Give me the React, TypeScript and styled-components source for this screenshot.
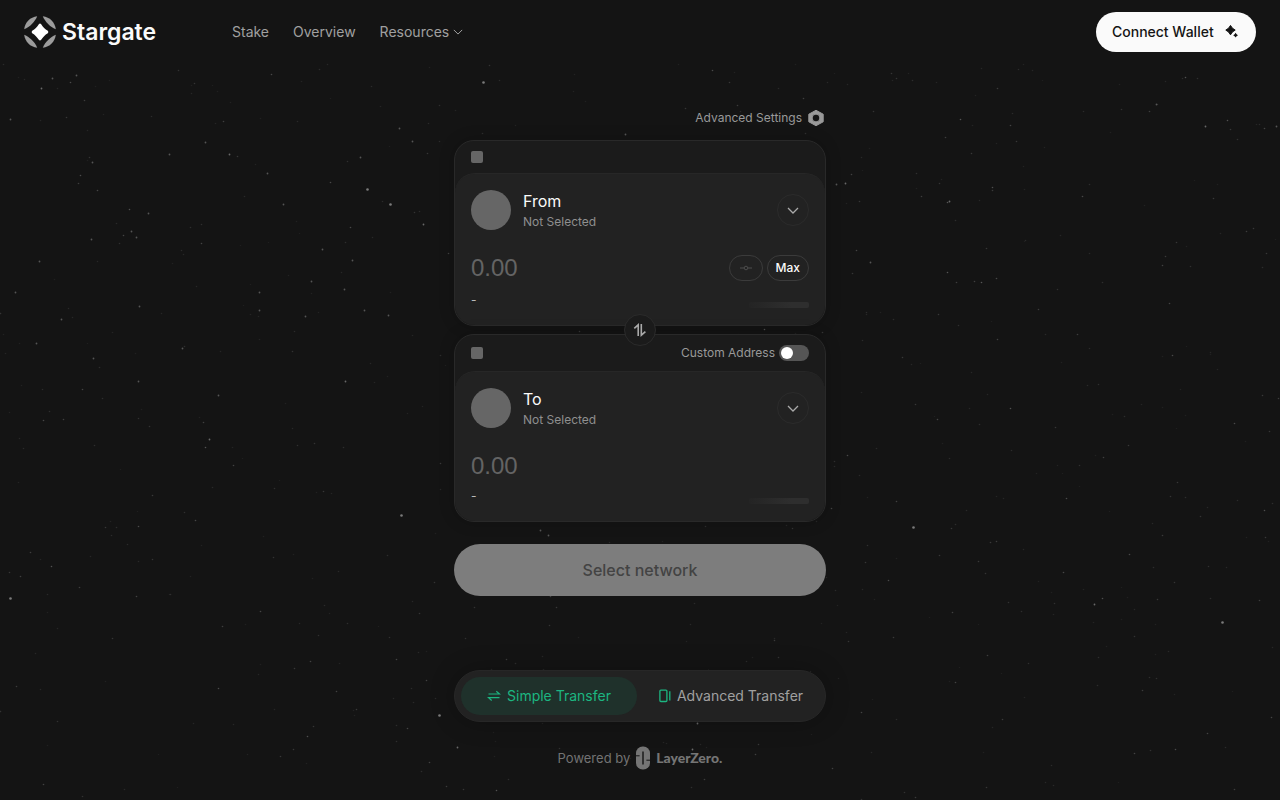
import React, { useState } from "react";
import styled, { createGlobalStyle } from "styled-components";

const GlobalStyle = createGlobalStyle`
  *, *::before, *::after { box-sizing: border-box; }
  body { margin: 0; background: #141414; color: #fafafa; font-family: Inter, "Liberation Sans", sans-serif; }
  button, input { font: inherit; color: inherit; margin: 0; }
  button { border: 0; background: none; padding: 0; cursor: pointer; }
  svg { display: block; flex: none; }
`;

const Page = styled.div`
  position: relative;
  min-height: 100vh;
  display: flex;
  flex-direction: column;
`;

const Sky = styled.svg`
  position: absolute;
  inset: 0;
  width: 100%;
  height: 100%;
  pointer-events: none;
`;

const Header = styled.header`
  position: relative;
  display: flex;
  align-items: center;
  padding: 12px 24px;
`;

const Brand = styled.a`
  display: flex;
  align-items: center;
  gap: 6px;
  width: 208px;
  color: #fafafa;
  text-decoration: none;
  font-size: 23px;
  font-weight: 600;
  line-height: 32px;
`;

const Nav = styled.nav`
  display: flex;
  gap: 24px;
  flex: 1;
  font-size: 14px;
  line-height: 20px;
  color: #a0a0a0;
`;

const NavLink = styled.a`
  color: inherit;
  text-decoration: none;
`;

const NavMenu = styled.button`
  display: flex;
  align-items: center;
  gap: 4px;
`;

const WalletButton = styled.button`
  display: flex;
  align-items: center;
  justify-content: space-between;
  width: 160px;
  height: 40px;
  padding: 0 16px;
  border-radius: 20px;
  background: #fafafa;
  color: #141414;
  font-size: 14px;
  font-weight: 500;
  line-height: 20px;
`;

const Main = styled.main`
  position: relative;
  flex: 1;
  display: flex;
  flex-direction: column;
  width: 100%;
  max-width: 372px;
  margin: 0 auto;
  padding-top: 44px;
`;

const SettingsButton = styled.button`
  display: flex;
  align-items: center;
  align-self: flex-end;
  gap: 4px;
  height: 20px;
  margin-bottom: 12px;
  font-size: 12px;
  line-height: 16px;
  color: #999;
`;

const Card = styled.section`
  border: 1px solid #292929;
  border-radius: 20px;
  background: #1b1b1b;
  box-shadow: 0 0 16px rgba(0, 0, 0, 0.2);
`;

const CardHead = styled.div<{ $tall?: boolean }>`
  display: flex;
  align-items: center;
  justify-content: space-between;
  height: ${(p) => (p.$tall ? 36 : 32)}px;
  padding: 0 16px;
`;

const Badge = styled.span`
  width: 12px;
  height: 12px;
  border-radius: 2px;
  background: #666;
`;

const CardBody = styled.div`
  border-top: 1px solid #272727;
  border-radius: 20px;
  background: #222;
  padding: 16px 16px 17px;
`;

const TokenRow = styled.div`
  display: flex;
  align-items: center;
  gap: 12px;
`;

const TokenIcon = styled.span`
  width: 40px;
  height: 40px;
  border-radius: 50%;
  background: #666;
`;

const TokenText = styled.div`
  display: flex;
  flex-direction: column;
  gap: 2px;
  flex: 1;
`;

const TokenTitle = styled.div`
  font-size: 16px;
  line-height: 22px;
`;

const TokenNote = styled.div`
  font-size: 12px;
  line-height: 16px;
  color: #8f8f8f;
`;

const RoundButton = styled.button<{ $dark?: boolean }>`
  display: flex;
  align-items: center;
  justify-content: center;
  flex: none;
  width: 32px;
  height: 32px;
  border: 1px solid #2b2b2b;
  border-radius: 50%;
  background: ${(p) => (p.$dark ? "#1b1b1b" : "transparent")};
  color: #aaa;
`;

const AmountRow = styled.div`
  display: flex;
  align-items: center;
  gap: 4px;
  height: 28px;
  margin-top: 24px;
`;

const AmountInput = styled.input`
  flex: 1;
  min-width: 0;
  height: 28px;
  padding: 0;
  border: 0;
  outline: 0;
  background: transparent;
  font: 400 24px/28px "Liberation Sans", sans-serif;
  &::placeholder { color: #646464; opacity: 1; }
`;

const Pill = styled.button`
  display: flex;
  align-items: center;
  justify-content: center;
  min-width: 34px;
  height: 26px;
  padding: 0 8px;
  border: 1px solid #3b3b3b;
  border-radius: 13px;
  font-size: 12px;
  font-weight: 500;
  line-height: 16px;
`;

const ValueRow = styled.div<{ $gap: number }>`
  display: flex;
  align-items: flex-end;
  justify-content: space-between;
  margin-top: ${(p) => p.$gap}px;
  font-size: 12px;
  line-height: 16px;
  color: #bbb;
`;

const Skeleton = styled.span`
  width: 60px;
  height: 6px;
  border-radius: 2px;
  background: linear-gradient(90deg, #242424, #2e2e2e 70%);
`;

const Seam = styled.div`
  position: relative;
  z-index: 1;
  display: flex;
  align-items: center;
  justify-content: center;
  height: 8px;
`;

const SwitchLabel = styled.label`
  display: flex;
  align-items: center;
  gap: 4px;
  font-size: 12px;
  line-height: 16px;
  color: #999;
`;

const Switch = styled.input`
  appearance: none;
  display: flex;
  align-items: center;
  width: 30px;
  height: 16px;
  padding: 0 2px;
  border-radius: 8px;
  background: #555;
  cursor: pointer;
  &::before {
    content: "";
    width: 12px;
    height: 12px;
    border-radius: 50%;
    background: #fff;
  }
  &:checked { justify-content: flex-end; background: #18a978; }
`;

const SubmitButton = styled.button`
  height: 52px;
  margin-top: 22px;
  border-radius: 26px;
  background: #7d7d7d;
  color: #434343;
  font-size: 16px;
  font-weight: 500;
  line-height: 22px;
`;

const ModeBar = styled.div`
  display: grid;
  grid-template-columns: 1fr 1fr;
  gap: 6px;
  height: 52px;
  margin-top: auto;
  padding: 6px;
  border: 1px solid #272727;
  border-radius: 26px;
  background: #222;
  box-shadow: 0 0 24px rgba(0, 0, 0, 0.25);
`;

const ModeButton = styled.button<{ $active?: boolean }>`
  display: flex;
  align-items: center;
  justify-content: center;
  gap: 6px;
  border-radius: 20px;
  background: ${(p) => (p.$active ? "#1f312b" : "transparent")};
  color: ${(p) => (p.$active ? "#1cb681" : "#a0a0a0")};
  font-size: 14px;
  line-height: 20px;
  white-space: nowrap;
`;

const Footer = styled.footer`
  position: relative;
  display: flex;
  align-items: center;
  justify-content: center;
  gap: 6px;
  padding: 24px 0 30px;
  font-size: 13px;
  line-height: 24px;
  color: #737373;
`;

const FooterBrand = styled.a`
  display: flex;
  align-items: center;
  gap: 6px;
  color: #757575;
  text-decoration: none;
  font-family: Lato, sans-serif;
  font-size: 14px;
  font-weight: 900;
`;

const brightStars: number[][] = [
  [41, 88, 2], [52, 78, 1], [76, 75, 1], [10, 119, 1], [92, 162, 1], [169, 154, 1], [229, 154, 2],
  [205, 142, 1], [267, 173, 1], [360, 157, 1], [412, 141, 1], [399, 128, 1], [367, 189, 3], [390, 204, 3],
  [423, 224, 2], [283, 204, 1], [148, 213, 1], [131, 231, 1], [136, 237, 1], [39, 261, 1], [91, 239, 1],
  [15, 292, 1], [139, 306, 1], [259, 292, 1], [259, 310, 1], [311, 281, 1], [322, 249, 1], [352, 260, 1],
  [344, 289, 1], [305, 316, 1], [364, 310, 1], [388, 315, 1], [61, 319, 1], [36, 343, 1], [93, 358, 1],
  [138, 381, 1], [345, 381, 2], [209, 439, 2], [182, 348, 1], [218, 395, 1], [401, 515, 3], [439, 715, 3],
  [10, 598, 3], [913, 527, 3], [1222, 622, 3], [845, 183, 2], [949, 201, 2], [1156, 104, 1],
  [1205, 126, 2], [870, 262, 1], [1094, 604, 2], [483, 82, 3], [457, 747, 2], [692, 749, 2],
  [625, 134, 1], [1276, 126, 1], [836, 184, 1], [697, 723, 2], [540, 530, 1], [548, 535, 1],
];

const faintStars = (() => {
  let seed = 71;
  const next = () => (seed = (seed * 16807) % 2147483647) / 2147483647;
  return Array.from({ length: 700 }, () => [
    Math.floor(next() * 1280),
    Math.floor(64 + next() * 736),
    0.05 + next() * next() * 0.25,
  ]);
})();

const Stars = () => (
  <Sky viewBox="0 0 1280 800" preserveAspectRatio="xMidYMid slice" aria-hidden="true">
    {faintStars.map(([x, y, o], i) => (
      <circle key={i} cx={x + 0.5} cy={y + 0.5} r="0.8" fill="#fff" opacity={o} />
    ))}
    {brightStars.map(([x, y, level], i) => (
      <circle key={i} cx={x + 0.5} cy={y + 0.5} r={level > 2 ? 1.3 : 0.9} fill="#fff" opacity={0.2 + level * 0.08} />
    ))}
  </Sky>
);

const StargateLogo = () => (
  <svg width="32" height="32" viewBox="0 0 32 32" aria-hidden="true">
    <g fill="#9c9c9c">
      {[0, 90, 180, 270].map((a) => (
        <path key={a} transform={`rotate(${a} 16 16)`} d="M0.2 13.2C1 6.2 6.2 1 13.2 .2C12 3.2 10.2 5.6 7.9 7.9C5.6 10.2 3.2 12 .2 13.2Z" />
      ))}
    </g>
    <path fill="#fff" d="M14.8 8.2Q16 7 17.2 8.2C18.9 11 21 13.1 23.8 14.8Q25 16 23.8 17.2C21 18.9 18.9 21 17.2 23.8Q16 25 14.8 23.8C13.1 21 11 18.9 8.2 17.2Q7 16 8.2 14.8C11 13.1 13.1 11 14.8 8.2Z" />
  </svg>
);

const Chevron = ({ width, stroke }: { width: number; stroke: number }) => (
  <svg width={width} height={width / 2 + 1} viewBox="0 0 12 7" fill="none" stroke="currentColor" strokeWidth={stroke} aria-hidden="true">
    <path d="M1 1l5 5 5-5" />
  </svg>
);

const Sparkles = () => (
  <svg width="16" height="16" viewBox="0 0 16 16" fill="currentColor" aria-hidden="true">
    <path d="M6.5 1.4Q8 4.7 11.2 6.1Q8 7.5 6.5 10.8Q5 7.5 1.8 6.1Q5 4.7 6.5 1.4Z" stroke="currentColor" strokeLinejoin="round" />
    <path d="M11.6 8.8Q12.4 10.4 14 11.2Q12.4 12 11.6 13.6Q10.8 12 9.2 11.2Q10.8 10.4 11.6 8.8Z" />
  </svg>
);

const HexNut = () => (
  <svg width="20" height="20" viewBox="0 0 20 20" aria-hidden="true">
    <path fill="#999" fillRule="evenodd" stroke="#999" strokeLinejoin="round" d="M10 2.3L17.2 6.2V13.8L10 17.7L2.8 13.8V6.2ZM10 6.1A3.9 3.9 0 1 0 10 13.9A3.9 3.9 0 1 0 10 6.1Z" />
  </svg>
);

const SwapArrows = () => (
  <svg width="14" height="14" viewBox="0 0 14 14" fill="none" stroke="currentColor" strokeWidth="1.6" aria-hidden="true">
    <path d="M1.3 5.4L5.2 1.8V13M8.3 1V12.2L12.4 8.6" />
  </svg>
);

const SliderGlyph = () => (
  <svg width="12" height="6" viewBox="0 0 12 6" fill="none" stroke="#4c4c4c" aria-hidden="true">
    <circle cx="6" cy="3" r="1.8" />
    <path d="M0 3h4M8 3h4" />
  </svg>
);

const TransferIcon = () => (
  <svg width="14" height="14" viewBox="0 0 14 14" fill="none" stroke="currentColor" strokeWidth="1.2" aria-hidden="true">
    <path d="M1.5 5h11L9.3 2.3M12.5 8.6h-11L4.7 11.5" />
  </svg>
);

const PanelIcon = () => (
  <svg width="12" height="14" viewBox="0 0 12 14" fill="none" stroke="#1cb681" strokeWidth="1.3" aria-hidden="true">
    <rect x=".9" y="1.1" width="7" height="11.4" rx="1" />
    <path d="M10.8 2.2v9.4" />
  </svg>
);

const LayerZeroMark = () => (
  <svg width="14" height="24" viewBox="0 0 14 24" aria-hidden="true">
    <rect x="0" y=".5" width="14" height="23" rx="6.6" fill="#757575" />
    <g fill="none" stroke="#141414">
      <path strokeWidth="1.4" d="M7 5.5V18.5" />
      <path strokeWidth="1" d="M0 9.8H3.6M14 14.2H10.4" />
    </g>
  </svg>
);

const TokenPicker = ({ title }: { title: string }) => (
  <TokenRow>
    <TokenIcon />
    <TokenText>
      <TokenTitle>{title}</TokenTitle>
      <TokenNote>Not Selected</TokenNote>
    </TokenText>
    <RoundButton aria-label={`Select ${title} token`}>
      <Chevron width={12} stroke={1.3} />
    </RoundButton>
  </TokenRow>
);

export default function App() {
  const [custom, setCustom] = useState(false);
  return (
    <>
      <GlobalStyle />
      <Page>
        <Stars />
        <Header>
          <Brand href="#">
            <StargateLogo />
            Stargate
          </Brand>
          <Nav>
            <NavLink href="#stake">Stake</NavLink>
            <NavLink href="#overview">Overview</NavLink>
            <NavMenu>
              Resources
              <Chevron width={10} stroke={1.2} />
            </NavMenu>
          </Nav>
          <WalletButton>
            Connect Wallet
            <Sparkles />
          </WalletButton>
        </Header>
        <Main>
          <SettingsButton>
            Advanced Settings
            <HexNut />
          </SettingsButton>
          <Card>
            <CardHead>
              <Badge />
            </CardHead>
            <CardBody>
              <TokenPicker title="From" />
              <AmountRow>
                <AmountInput aria-label="Amount to send" placeholder="0.00" />
                <Pill aria-label="Adjust amount">
                  <SliderGlyph />
                </Pill>
                <Pill>Max</Pill>
              </AmountRow>
              <ValueRow $gap={10}>
                <span>-</span>
                <Skeleton />
              </ValueRow>
            </CardBody>
          </Card>
          <Seam>
            <RoundButton $dark aria-label="Swap direction">
              <SwapArrows />
            </RoundButton>
          </Seam>
          <Card>
            <CardHead $tall>
              <Badge />
              <SwitchLabel>
                Custom Address
                <Switch type="checkbox" checked={custom} onChange={(e) => setCustom(e.target.checked)} />
              </SwitchLabel>
            </CardHead>
            <CardBody>
              <TokenPicker title="To" />
              <AmountRow>
                <AmountInput aria-label="Amount to receive" placeholder="0.00" readOnly />
              </AmountRow>
              <ValueRow $gap={8}>
                <span>-</span>
                <Skeleton />
              </ValueRow>
            </CardBody>
          </Card>
          <SubmitButton>Select network</SubmitButton>
          <ModeBar>
            <ModeButton $active>
              <TransferIcon />
              Simple Transfer
            </ModeButton>
            <ModeButton>
              <PanelIcon />
              Advanced Transfer
            </ModeButton>
          </ModeBar>
        </Main>
        <Footer>
          Powered by
          <FooterBrand href="#layerzero">
            <LayerZeroMark />
            LayerZero.
          </FooterBrand>
        </Footer>
      </Page>
    </>
  );
}
